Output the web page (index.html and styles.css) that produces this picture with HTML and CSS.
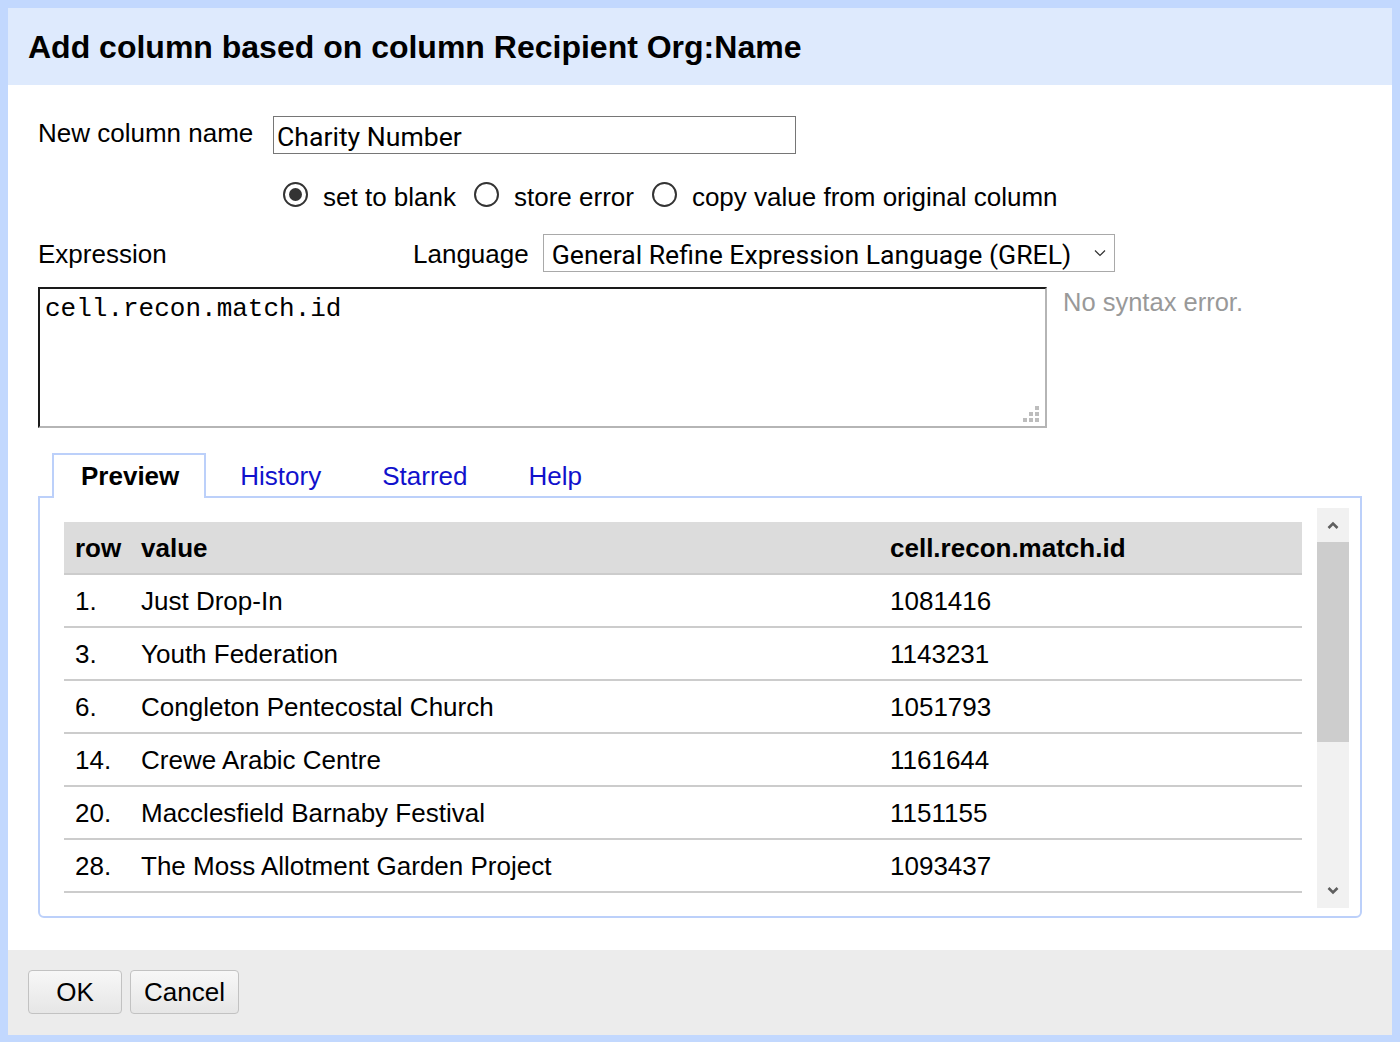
FILE: index.html
```html
<!DOCTYPE html>
<html lang="en">
<head>
<meta charset="utf-8">
<title>Add column based on column</title>
<link rel="stylesheet" href="styles.css">
</head>
<body>
<div class="dialog">
  <div class="dialog-header">
    <h1 class="dialog-title">Add column based on column Recipient Org:Name</h1>
  </div>
  <div class="dialog-body">
    <div class="name-row">
      <label class="name-label" for="colname">New column name</label>
      <input id="colname" class="name-input" type="text" value="Charity Number">
    </div>
    <div class="radio-row">
      <span class="radio checked"></span><span class="radio-text">set to blank</span>
      <span class="radio"></span><span class="radio-text">store error</span>
      <span class="radio"></span><span class="radio-text">copy value from original column</span>
    </div>
    <div class="expr-row">
      <span class="expr-label">Expression</span>
      <span class="lang-label">Language</span>
      <div class="select">
        <span class="select-text">General Refine Expression Language (GREL)</span>
        <svg class="select-arrow" width="12" height="8" viewBox="0 0 12 8"><path d="M1 1.5 L6 6.5 L11 1.5" fill="none" stroke="#333" stroke-width="1.2"/></svg>
      </div>
    </div>
    <div class="code-row">
      <div class="code-box">
        <textarea class="code-area" spellcheck="false">cell.recon.match.id</textarea>
        <svg class="grip" width="18" height="18" viewBox="0 0 18 18">
          <rect x="12" y="0" width="4" height="4" fill="#bdbdbd"/>
          <rect x="6" y="6" width="4" height="4" fill="#bdbdbd"/>
          <rect x="12" y="6" width="4" height="4" fill="#bdbdbd"/>
          <rect x="0" y="12" width="4" height="4" fill="#bdbdbd"/>
          <rect x="6" y="12" width="4" height="4" fill="#bdbdbd"/>
          <rect x="12" y="12" width="4" height="4" fill="#bdbdbd"/>
        </svg>
      </div>
      <div class="status">No syntax error.</div>
    </div>
    <div class="tabs">
      <span class="tab active">Preview</span>
      <a class="tab">History</a>
      <a class="tab">Starred</a>
      <a class="tab">Help</a>
    </div>
    <div class="panel">
      <div class="table-wrap">
        <table class="preview">
          <colgroup><col class="c-row"><col class="c-val"><col class="c-res"></colgroup>
          <thead>
            <tr><th>row</th><th>value</th><th>cell.recon.match.id</th></tr>
          </thead>
          <tbody>
            <tr><td>1.</td><td>Just Drop-In</td><td>1081416</td></tr>
            <tr><td>3.</td><td>Youth Federation</td><td>1143231</td></tr>
            <tr><td>6.</td><td>Congleton Pentecostal Church</td><td>1051793</td></tr>
            <tr><td>14.</td><td>Crewe Arabic Centre</td><td>1161644</td></tr>
            <tr><td>20.</td><td>Macclesfield Barnaby Festival</td><td>1151155</td></tr>
            <tr><td>28.</td><td>The Moss Allotment Garden Project</td><td>1093437</td></tr>
          </tbody>
        </table>
      </div>
      <div class="scrollbar">
        <div class="sb-btn">
          <svg width="12" height="8" viewBox="0 0 12 8"><path d="M1.5 7 L6 2.5 L10.5 7" fill="none" stroke="#5f5f5f" stroke-width="2.6"/></svg>
        </div>
        <div class="sb-thumb"></div>
        <div class="sb-track"></div>
        <div class="sb-btn">
          <svg width="12" height="8" viewBox="0 0 12 8"><path d="M1.5 1 L6 5.5 L10.5 1" fill="none" stroke="#5f5f5f" stroke-width="2.6"/></svg>
        </div>
      </div>
    </div>
  </div>
  <div class="dialog-footer">
    <button class="btn btn-ok">OK</button>
    <button class="btn">Cancel</button>
  </div>
</div>
</body>
</html>
```
FILE: styles.css
```css
html, body {
  margin: 0;
  padding: 0;
}
body {
  background: #c2d8fe;
  padding: 8px 8px 7px 8px;
  box-sizing: border-box;
  height: 1042px;
  font-family: "Liberation Sans", Arial, sans-serif;
  font-size: 26px;
  color: #000;
}
.dialog {
  background: #fff;
  height: 1027px;
  display: flex;
  flex-direction: column;
}
.dialog-header {
  height: 77px;
  background: #deeafd;
  display: flex;
  align-items: center;
  padding-left: 20px;
  flex: none;
}
.dialog-title {
  margin: 0;
  font-size: 32px;
  font-weight: bold;
  position: relative;
  top: 1px;
}
.dialog-body {
  flex: 1;
  padding: 0 30px;
}
.name-row {
  margin-top: 31px;
  height: 38px;
  display: flex;
  align-items: center;
}
.name-label {
  width: 235px;
  flex: none;
  position: relative;
  top: -2px;
}
.name-input {
  width: 523px;
  height: 38px;
  box-sizing: border-box;
  border: 1px solid #767676;
  border-radius: 0;
  padding: 2px 3px 0 3px;
  margin: 0;
  font-family: Roboto, "Liberation Sans", sans-serif;
  font-size: 26.6px;
  color: #000;
  outline: none;
}
.radio-row {
  margin-top: 28px;
  height: 30px;
  padding-left: 245px;
  display: flex;
  align-items: center;
}
.radio {
  width: 25px;
  height: 25px;
  box-sizing: border-box;
  border: 2px solid #333;
  border-radius: 50%;
  flex: none;
  display: flex;
  align-items: center;
  justify-content: center;
  position: relative;
  top: -3px;
}
.radio.checked::after {
  content: "";
  width: 13px;
  height: 13px;
  border-radius: 50%;
  background: #333;
}
.radio-text {
  margin-left: 15px;
  margin-right: 18px;
}
.expr-row {
  margin-top: 22px;
  height: 38px;
  display: flex;
  align-items: center;
}
.expr-label {
  width: 375px;
  flex: none;
  position: relative;
  top: 1px;
}
.lang-label {
  flex: none;
  position: relative;
  top: 1px;
}
.select {
  margin-left: 14px;
  width: 572px;
  height: 38px;
  box-sizing: border-box;
  border: 1px solid #a9a9a9;
  display: flex;
  align-items: center;
  padding-left: 8px;
  font-family: Roboto, "Liberation Sans", sans-serif;
  font-size: 26.6px;
}
.select-text {
  flex: 1;
  position: relative;
  top: 1px;
}
.select-arrow {
  margin-right: 8px;
}
.code-row {
  margin-top: 15px;
  display: flex;
  align-items: flex-start;
}
.code-box {
  position: relative;
  width: 1009px;
  height: 141px;
  flex: none;
}
.code-area {
  width: 100%;
  height: 100%;
  box-sizing: border-box;
  margin: 0;
  border-style: solid;
  border-width: 2px;
  border-color: #1a1a1a #b5b5b5 #b5b5b5 #1a1a1a;
  padding: 5px 5px;
  resize: none;
  font-family: "Liberation Mono", "Courier New", monospace;
  font-size: 26px;
  line-height: 30px;
  color: #000;
  outline: none;
  display: block;
}
.grip {
  position: absolute;
  right: 6px;
  bottom: 4px;
}
.status {
  margin-left: 16px;
  color: #999;
  line-height: 30px;
  font-size: 25.5px;
}
.tabs {
  margin-top: 25px;
  height: 43px;
  padding-left: 14px;
  display: flex;
  align-items: flex-start;
  gap: 5px;
}
.tab {
  height: 45px;
  box-sizing: border-box;
  padding: 0 25px 0 27px;
  border: 2px solid transparent;
  border-bottom: none;
  display: flex;
  align-items: center;
  font-size: 26px;
  color: #1111cc;
  position: relative;
  z-index: 1;
}
.tab.active {
  border-color: #bcd0fa;
  background: #fff;
  color: #000;
  font-weight: bold;
}
.panel {
  height: 422px;
  box-sizing: border-box;
  border: 2px solid #bcd0fa;
  border-radius: 0 0 6px 6px;
  padding: 10px 10px 8px 24px;
  display: flex;
  gap: 15px;
}
.table-wrap {
  margin-top: 14px;
  width: 1238px;
  height: 371px;
  overflow: hidden;
  flex: none;
}
.preview {
  width: 1238px;
  border-collapse: collapse;
  table-layout: fixed;
}
.c-row { width: 66px; }
.c-val { width: 749px; }
.c-res { width: 423px; }
.preview th,
.preview td {
  height: 49px;
  padding: 2px 0 0 11px;
  text-align: left;
  border-bottom: 2px solid #cccccc;
  white-space: nowrap;
  font-size: 26px;
}
.preview th {
  background: #dcdcdc;
  font-weight: bold;
}
.scrollbar {
  width: 32px;
  height: 400px;
  background: #f1f1f1;
  display: flex;
  flex-direction: column;
  flex: none;
}
.sb-btn {
  height: 34px;
  display: flex;
  align-items: center;
  justify-content: center;
  flex: none;
}
.sb-thumb {
  height: 200px;
  background: #cdcdcd;
  flex: none;
}
.sb-track {
  flex: 1;
}
.dialog-footer {
  height: 85px;
  flex: none;
  background: #ececec;
  padding: 20px 20px 0 20px;
  box-sizing: border-box;
  display: flex;
  align-items: flex-start;
  gap: 8px;
}
.btn {
  height: 44px;
  padding: 0 13px;
  border: 1px solid #c2c2c2;
  border-radius: 4px;
  background: linear-gradient(#f7f7f7, #e6e6e6);
  font-family: "Liberation Sans", Arial, sans-serif;
  font-size: 26px;
  color: #000;
  margin: 0;
}
.btn-ok {
  width: 94px;
}
```
